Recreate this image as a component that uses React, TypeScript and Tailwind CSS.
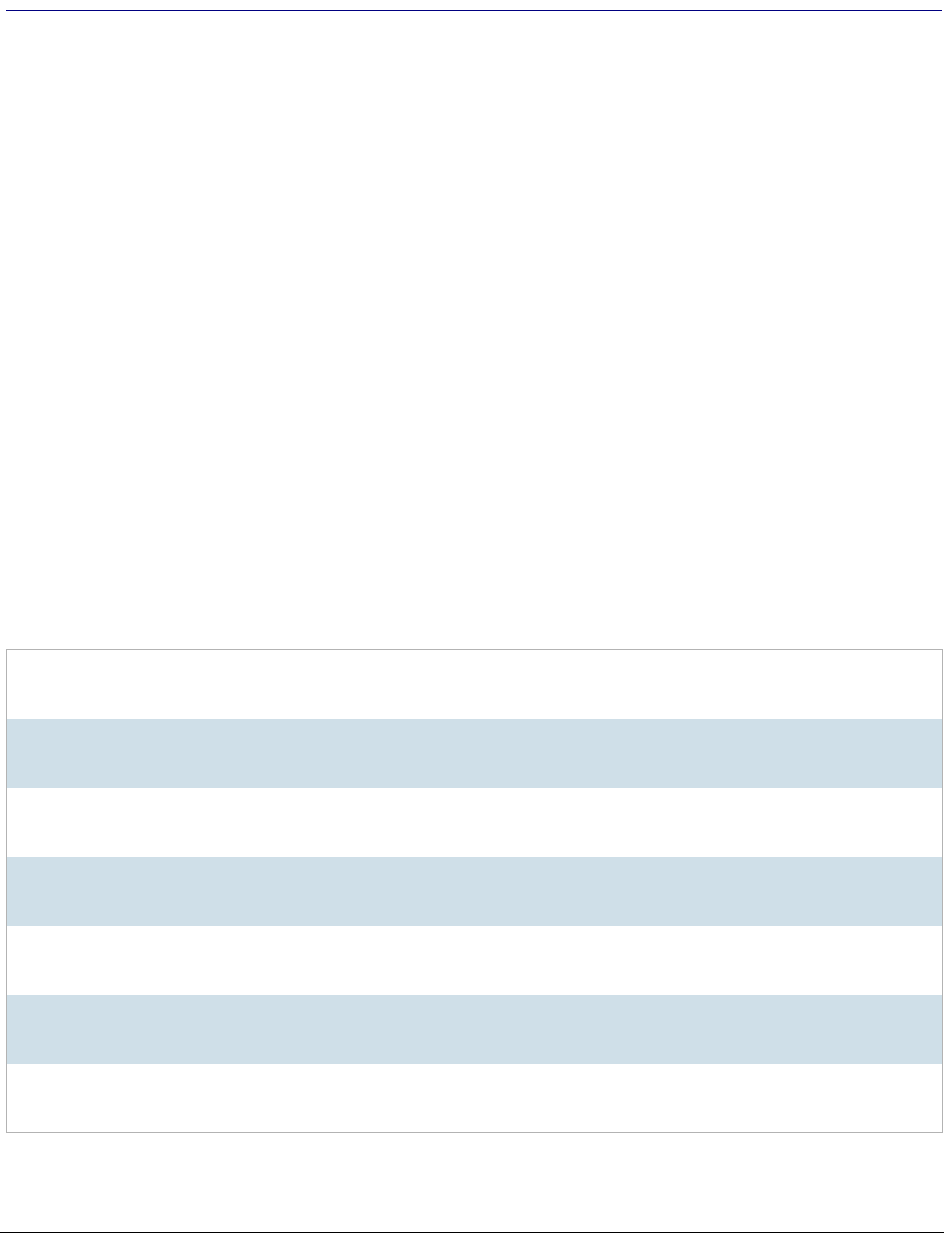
const rows = [0, 1, 2, 3, 4, 5, 6];

function App() {
    return (
        <div className="min-h-[1233px] flex flex-col bg-white">
            <div className="pl-[6px] pt-[10px]">
                <div className="w-[936px] h-px bg-[#000080]" />
                <table className="mt-[638px] w-[937px] border-collapse border border-[#b3b3b3]">
                    <tbody>
                        {rows.map((r) => (
                            <tr
                                key={r}
                                className={
                                    r % 2 === 1
                                        ? "h-[69px] bg-[#cfdfe8]"
                                        : "h-[69px] bg-white"
                                }
                            >
                                <td className="p-0"></td>
                            </tr>
                        ))}
                    </tbody>
                </table>
            </div>
            <div className="mt-auto h-px bg-black" />
        </div>
    );
}

export default App;
